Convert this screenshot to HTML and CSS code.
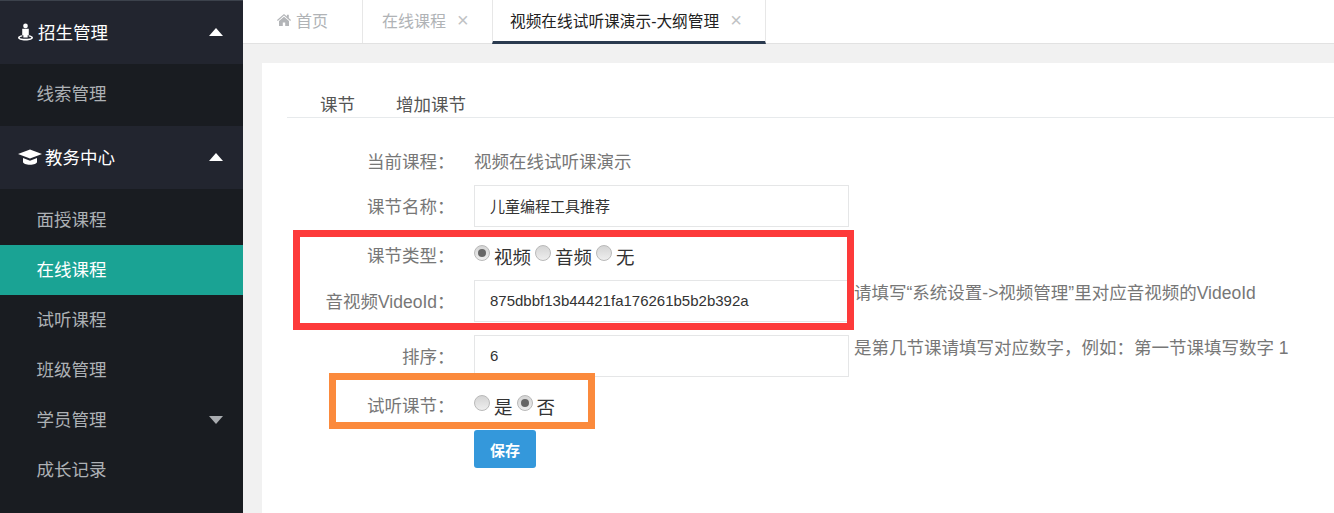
FILE: index.html
```html
<!DOCTYPE html>
<html lang="zh-CN">
<head>
<meta charset="utf-8">
<title>大纲管理</title>
<link rel="stylesheet" href="styles.css">
</head>
<body>
<div class="app">
  <aside class="sidebar">
    <div class="group-head">
      <svg class="ico-person" viewBox="0 0 16 18"><circle cx="8" cy="2.500" r="2.500"/><path d="M4.500 5.500h7v7h-1.200v2.300H5.700v-2.300H4.500z"/><path fill-rule="evenodd" d="M4.600 12.400v1.300C2.800 14 1.800 14.500 1.800 15.100c0 .8 2.800 1.200 6.200 1.200s6.200-.4 6.200-1.200c0-.6-1-1.100-2.800-1.400v-1.300c2.700.3 4.600 1.300 4.600 2.700 0 1.600-3.400 2.900-8 2.900s-8-1.300-8-2.900c0-1.400 1.900-2.400 4.600-2.700z"/></svg>
      <span class="head-text">招生管理</span>
      <i class="caret up"></i>
    </div>
    <ul class="sub first">
      <li>线索管理</li>
    </ul>
    <div class="group-head">
      <svg class="ico-cap" viewBox="0 0 24 16"><path d="M12 .5 24 5 12 9.500 0 5z"/><path d="M5 9v4c0 1.600 3.200 2.800 7 2.800s7-1.200 7-2.800V9l-7 2.700z"/></svg>
      <span class="head-text">教务中心</span>
      <i class="caret up"></i>
    </div>
    <ul class="sub">
      <li>面授课程</li>
      <li class="active">在线课程</li>
      <li>试听课程</li>
      <li>班级管理</li>
      <li>学员管理<i class="caret down"></i></li>
      <li>成长记录</li>
      <li class="last">学校运营</li>
    </ul>
  </aside>
  <main class="main">
    <nav class="tabs">
      <div class="tab home"><svg class="ico-home" viewBox="0 0 14 12"><path d="M7 0 0 6l.8.900L7 1.600l6.200 5.300L14 6l-2.200-1.900V.8h-1.900v1.700z"/><path d="M7 2.700 2 7v5h3.800V8.500h2.400V12H12V7z"/></svg>首页</div>
      <div class="tab">在线课程<span class="close">×</span></div>
      <div class="tab current">视频在线试听课演示-大纲管理<span class="close">×</span></div>
    </nav>
    <section class="panel">
      <div class="subnav"><a>课节</a><a>增加课节</a></div>
      <form class="form">
        <div class="row row-text"><label>当前课程：</label><span class="value">视频在线试听课演示</span></div>
        <div class="row"><label>课节名称：</label><div class="field">儿童编程工具推荐</div></div>
        <div class="row row-radio">
          <label class="low">课节类型：</label>
          <div class="radios">
            <span class="radio on"></span><span class="opt">视频</span>
            <span class="radio"></span><span class="opt">音频</span>
            <span class="radio"></span><span class="opt">无</span>
          </div>
        </div>
        <div class="row"><label>音视频VideoId：</label><div class="field">875dbbf13b44421fa176261b5b2b392a</div><span class="help">请填写“系统设置-&gt;视频管理”里对应音视频的VideoId</span></div>
        <div class="row spaced"><label>排序：</label><div class="field">6</div><span class="help">是第几节课请填写对应数字，例如：第一节课填写数字 1</span></div>
        <div class="row row-radio">
          <label class="low">试听课节：</label>
          <div class="radios">
            <span class="radio"></span><span class="opt">是</span>
            <span class="radio on"></span><span class="opt">否</span>
          </div>
        </div>
        <button class="save" type="button">保存</button>
      </form>
      <div class="mark mark-red"></div>
      <div class="mark mark-orange"></div>
    </section>
  </main>
</div>
</body>
</html>
```
FILE: styles.css
```css
* { box-sizing: border-box; }
html, body { margin: 0; height: 100%; overflow: hidden; }
body {
  font-family: "Liberation Sans", "Noto Sans CJK SC", sans-serif;
  font-size: 17.500px;
  color: #676a6c;
  background: #f1f1f1;
}
.app { display: flex; height: 513px; overflow: hidden; }

.sidebar {
  flex: 0 0 243px;
  background: #191c21;
  border-top: 1px solid #3c424c;
  overflow: hidden;
}
.group-head {
  height: 63px;
  background: #22252f;
  display: flex;
  align-items: center;
  padding: 0 20px 2px 18px;
  color: #fff;
  font-size: 17.500px;
}
.head-text { flex: 1; }
.ico-person { width: 15px; height: 18px; fill: #fff; margin-right: 5px; }
.ico-cap { width: 24px; height: 16px; fill: #fff; margin-right: 3px; }
.caret { display: block; width: 0; height: 0; border-left: 7.500px solid transparent; border-right: 7.500px solid transparent; }
.caret.up { border-bottom: 8px solid #fff; }
.caret.down { border-top: 8px solid #a9acb0; margin-top: 3px; }
.sub { list-style: none; margin: 0; padding: 6px 0 0; }
.sub.first { padding: 5px 0 7px; }
.sub li {
  height: 50px;
  padding: 0 20px 3px 36.500px;
  display: flex;
  align-items: center;
  justify-content: space-between;
  color: #adb1b5;
  font-size: 17.500px;
}
.sub li.last { padding-bottom: 0; }
.sub li.active { background: #1aa394; color: #fff; }

.main { flex: 1; min-width: 0; display: flex; flex-direction: column; }
.tabs {
  height: 44px;
  flex: none;
  background: #fff;
  border-bottom: 1px solid #e2e2e2;
  display: flex;
}
.tab {
  display: flex;
  align-items: center;
  height: 43px;
  border-right: 1px solid #e7e7e7;
  color: #b0b3b6;
  font-size: 16px;
  padding: 0 0 4px 19px;
}
.tab.home { width: 120px; padding-left: 34px; }
.tab:nth-child(2) { width: 130px; }
.tab.current {
  width: 274px;
  height: 44px;
  color: #222;
  font-size: 15.700px;
  padding-left: 17px;
  border-left: 1px solid #e7e7e7;
  border-bottom: 3px solid #2a3a4f;
  margin-left: -1px;
  padding-bottom: 1px;
}
.ico-home { width: 14px; height: 12px; fill: #b3b5b8; margin-right: 5px; }
.close { font-size: 20px; color: #c0c2c4; margin-left: 11px; line-height: 1; }

.panel {
  flex: 1;
  margin: 19px 0 0 19px;
  background: #fff;
  padding: 0 0 0 25px;
  position: relative;
}
.subnav {
  height: 55px;
  border-bottom: 1px solid #e7eaec;
  display: flex;
  align-items: flex-end;
  gap: 41px;
  padding: 0 0 1px 33px;
  color: #555;
  font-size: 17.500px;
}
.form { padding-top: 22px; display: flex; flex-direction: column; }
.row { display: flex; align-items: center; height: 42px; }
.row label { flex: 0 0 167.500px; text-align: right; color: #777; white-space: nowrap; padding-bottom: 2px; }
.row label.low { padding-bottom: 0; padding-top: 1px; }
.row .field, .row .value, .row .radios { margin-left: 19.500px; }
.row-text { height: 45px; padding-bottom: 3px; }
.value { color: #777; padding-bottom: 2px; }
.row-radio { height: 53px; }
.spaced { margin-top: 13px; }
.field {
  width: 375px;
  height: 42px;
  border: 1px solid #e5e6e7;
  background: #fff;
  padding: 0 15px 1px;
  display: flex;
  align-items: center;
  color: #333;
  font-size: 15px;
}
.help { margin-left: 5px; color: #777; white-space: nowrap; font-size: 17.500px; padding-bottom: 20px; }
.radios { display: flex; align-items: flex-start; color: #333; font-size: 18.500px; padding-top: 7px; }
.radio {
  width: 16px;
  height: 16px;
  border-radius: 50%;
  border: 1px solid #b9b9b9;
  background: linear-gradient(#d4d4d4, #eeeeee);
  position: relative;
  margin-top: -2px;
}
.radio.on::after {
  content: "";
  position: absolute;
  left: 3px;
  top: 3px;
  width: 8px;
  height: 8px;
  border-radius: 50%;
  background: #666;
}
.opt { margin: 1px 4px 0 4px; line-height: 20px; }
.save {
  margin-left: 187px;
  width: 62px;
  height: 38px;
  background: #3498db;
  border: 0;
  border-radius: 3px;
  color: #fff;
  font-family: inherit;
  font-size: 15px;
  font-weight: 700;
}

.mark { position: absolute; pointer-events: none; }
.mark-red { left: 31px; top: 167px; width: 561px; height: 100px; border: 7px solid #fd3a3a; }
.mark-orange { left: 67px; top: 310px; width: 266px; height: 56px; border: 7px solid #fb8a3c; }
```
